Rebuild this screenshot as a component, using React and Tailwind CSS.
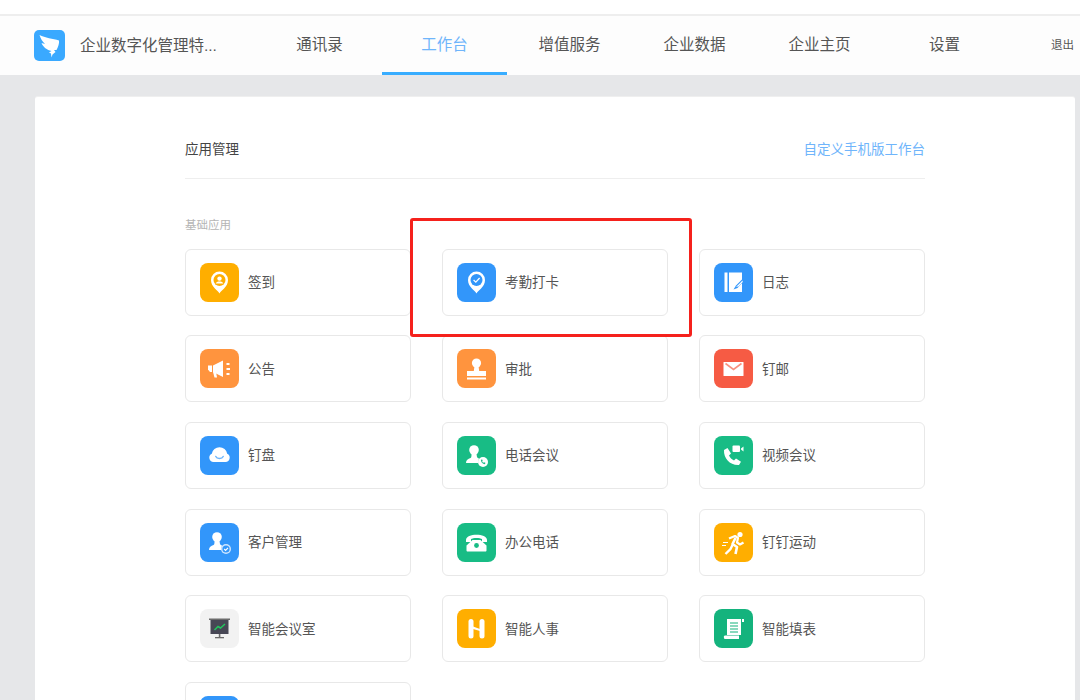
import React from 'react';

const Pin = ({ bg, children }) => (
    <>
        <path d="M19.5 30.5 C18 27.5 11 24 11 17 A8.5 8.5 0 0 1 28 17 C28 24 21 27.5 19.5 30.5Z" fill="#fff" />
        <circle cx="19.5" cy="17" r="6" fill={bg} />
        {children}
    </>
);

const icons = {
    sign: (
        <Pin bg="#ffae00">
            <circle cx="19.5" cy="15.6" r="2.2" fill="#fff" />
            <path d="M15.6 20.6 C16 18.9 17.6 18.4 19.5 18.4 C21.4 18.4 23 18.9 23.4 20.6Z" fill="#fff" />
        </Pin>
    ),
    attendance: (
        <Pin bg="#3296fa">
            <path d="M16.6 17 L18.8 19.2 L22.6 15" fill="none" stroke="#fff" strokeWidth="1.2" />
        </Pin>
    ),
    diary: (
        <>
            <rect x="10.5" y="9.5" width="3" height="19.5" fill="#fff" />
            <path d="M15 9.5 H28 V29 H15Z" fill="#fff" />
            <path d="M29 15.5 L22 22.5 L19.5 26.5 L23.5 25 L29.5 18.5Z" fill="#3296fa" />
            <path d="M28.5 17.5 L23.5 22.5 L22 23.8 L24.5 23.5 L28.8 19Z" fill="#fff" />
        </>
    ),
    notice: (
        <>
            <path d="M8 16.5 H12 V23 H10 L8 20.5Z" fill="#fff" />
            <path d="M13 16.5 L23 11.5 V28 L13 23Z" fill="#fff" />
            <path d="M13 23 H16 L17 28.5 H14.5Z" fill="#fff" />
            <rect x="26.5" y="14" width="3" height="2" fill="#fff" />
            <rect x="26.5" y="19" width="3.5" height="2" fill="#fff" />
            <rect x="26.5" y="24" width="3" height="2" fill="#fff" />
        </>
    ),
    approve: (
        <>
            <circle cx="19.5" cy="14" r="4.6" fill="#fff" />
            <path d="M17.5 17 H21.5 L22.2 22 H29 V27 H10 V22 H16.8Z" fill="#fff" />
            <rect x="10" y="28.5" width="19" height="2" fill="#fff" />
        </>
    ),
    mail: (
        <>
            <rect x="9.5" y="13" width="20" height="14" rx="0.5" fill="#fff" />
            <path d="M11.5 14.5 L19.5 20.5 L27.5 14.5" fill="none" stroke="#f8917f" strokeWidth="1.6" />
        </>
    ),
    disk: (
        <>
            <path d="M13.5 26 A4.3 4.3 0 0 1 11.8 17.8 A7.8 7.8 0 0 1 27.2 17.8 A4.3 4.3 0 0 1 25.5 26Z" fill="#fff" />
            <path d="M15.8 20.5 C17 23.2 22 23.2 23.2 20.5" fill="none" stroke="#6db5fb" strokeWidth="1.5" strokeLinecap="round" />
        </>
    ),
    phoneMeet: (
        <>
            <circle cx="17" cy="14" r="4.8" fill="#fff" />
            <path d="M14.5 18 H19.5 L20 21 C20.5 22 21 22 22 22.5 L21 27 H9 C9 24 11 23 13.5 22 C14.5 21.5 14.5 20 14.5 18Z" fill="#fff" />
            <circle cx="26" cy="26" r="5" fill="#fff" />
            <path d="M24 23.8 C23.8 26 25.6 28.2 28 28.2 L28.4 26.8 L26.9 26.2 L26.3 26.8 C25.8 26.5 25.3 26 25.1 25.4 L25.7 24.9 L25.2 23.4Z" fill="#18bc85" />
        </>
    ),
    videoMeet: (
        <>
            <path d="M10 14 L13.5 12 L17 17.5 L15 19.5 C16 21.8 17.8 23.5 20 24.4 L22 22.5 L27 25.8 L25 29 C16 29.5 9.5 22.5 10 14Z" fill="#fff" />
            <rect x="18.5" y="9.5" width="7.5" height="6.5" rx="1" fill="#fff" />
            <path d="M27 12.5 L29.5 10.5 V15.5 L27 13.5Z" fill="#fff" />
        </>
    ),
    customer: (
        <>
            <circle cx="17" cy="14" r="4.8" fill="#fff" />
            <path d="M14.5 18 H19.5 L20 21 C20.5 22 21 22 22 22.5 L21 27 H9 C9 24 11 23 13.5 22 C14.5 21.5 14.5 20 14.5 18Z" fill="#fff" />
            <circle cx="26" cy="26" r="5" fill="#cfe6fe" />
            <circle cx="26" cy="26" r="3.6" fill="#3296fa" />
            <path d="M24.2 26 L25.6 27.4 L28 24.8" fill="none" stroke="#fff" strokeWidth="1.2" />
        </>
    ),
    officePhone: (
        <>
            <path d="M9 17 C9 10 30 10 30 17 V19 H25 V16 C23 14.5 16 14.5 14 16 V19 H9Z" fill="#fff" />
            <path d="M15.5 17 H23.5 L29.5 22.5 V27.5 C29.5 28 29 28.5 28.5 28.5 H10.5 C10 28.5 9.5 28 9.5 27.5 V22.5Z" fill="#fff" />
            <circle cx="19.5" cy="22.5" r="2.4" fill="#18bc85" />
        </>
    ),
    sport: (
        <>
            <circle cx="26" cy="11.5" r="2.6" fill="#fff" />
            <path d="M15 15.5 L21 13 L24 15 L23 19.5 L26 21.5 L29.5 19.5" fill="none" stroke="#fff" strokeWidth="2.2" strokeLinejoin="round" />
            <path d="M21.5 15 L18.5 21 L23 24 L21.5 31" fill="none" stroke="#fff" strokeWidth="2.6" strokeLinejoin="round" />
            <path d="M18.5 22 L16.5 26 L11.5 31" fill="none" stroke="#fff" strokeWidth="2.4" />
            <path d="M9 19.5 H14 M8 22.5 H12" stroke="#fff" strokeWidth="1" />
        </>
    ),
    room: (
        <>
            <rect x="9" y="9.5" width="21" height="1.5" fill="#6b6b6b" />
            <rect x="10.5" y="11" width="18" height="14" fill="#474755" />
            <path d="M14.5 21 L18 17.5 L20.5 19 L25 15" fill="none" stroke="#22c55e" strokeWidth="1.5" />
            <rect x="18.8" y="25" width="1.6" height="3.5" fill="#6b6b6b" />
            <rect x="15" y="28" width="9" height="1.3" fill="#6b6b6b" />
        </>
    ),
    hr: (
        <>
            <rect x="11.5" y="10" width="5" height="19.5" rx="2.5" fill="#fff" />
            <rect x="22.5" y="10" width="5" height="19.5" rx="2.5" fill="#fff" />
            <path d="M16 17.5 L23 20 V22 L16 20Z" fill="#fff" />
        </>
    ),
    form: (
        <>
            <path d="M13 10 H27 V26 H13Z" fill="#fff" />
            <path d="M10 29 C9.5 27.5 10 26.5 11 26.5 H25 V30 H10.5Z" fill="#fff" />
            <rect x="28" y="10" width="2" height="3" fill="#fff" />
            <path d="M16 14 H24 M16 17 H24 M16 20 H24 M16 23 H24" stroke="#14b37d" strokeWidth="1.2" />
        </>
    ),
};

const apps = [
    { name: '签到', color: 'bg-[#ffae00]', icon: 'sign' },
    { name: '考勤打卡', color: 'bg-[#3296fa]', icon: 'attendance' },
    { name: '日志', color: 'bg-[#3296fa]', icon: 'diary' },
    { name: '公告', color: 'bg-[#ff943e]', icon: 'notice' },
    { name: '审批', color: 'bg-[#ff943e]', icon: 'approve' },
    { name: '钉邮', color: 'bg-[#f65b44]', icon: 'mail' },
    { name: '钉盘', color: 'bg-[#3296fa]', icon: 'disk' },
    { name: '电话会议', color: 'bg-[#18bc85]', icon: 'phoneMeet' },
    { name: '视频会议', color: 'bg-[#18bc85]', icon: 'videoMeet' },
    { name: '客户管理', color: 'bg-[#3296fa]', icon: 'customer' },
    { name: '办公电话', color: 'bg-[#18bc85]', icon: 'officePhone' },
    { name: '钉钉运动', color: 'bg-[#ffae00]', icon: 'sport' },
    { name: '智能会议室', color: 'bg-[#f2f2f2]', icon: 'room' },
    { name: '智能人事', color: 'bg-[#ffae00]', icon: 'hr' },
    { name: '智能填表', color: 'bg-[#14b37d]', icon: 'form' },
    { name: '', color: 'bg-[#3296fa]', icon: null },
];

const tabs = ['通讯录', '工作台', '增值服务', '企业数据', '企业主页', '设置'];

const App = () => {
    return (
        <div className="relative w-[1080px] h-[700px] overflow-hidden bg-[#e6e7e9] font-['Liberation_Sans','Noto_Sans_CJK_SC',sans-serif]">
            <div className="h-[14px] bg-white"></div>
            <div className="h-[2px] bg-[#eeeeee]"></div>

            {/* Header */}
            <header className="h-[59px] bg-[#fdfdfd] flex items-center">
                <div className="ml-[34px] w-[31px] h-[31px] rounded-[5px] bg-[#3aa9ff] flex items-center justify-center shrink-0">
                    <svg width="31" height="31" viewBox="0 0 31 31">
                        <path d="M5.5 5 C11 8 19 8.5 25 10.5 C25.5 13 24 17.5 22.5 20 H20 L21.5 22 L18.5 24.5 L17.5 27.5 L17 23.5 L15 22.5 L17.5 21 C13 20 9 17 7.5 13 L11 14 C8.5 11.5 6.5 8.5 5.5 5Z" fill="#fff" />
                    </svg>
                </div>
                <div className="ml-[15px] w-[142px] text-[15.5px] text-[#555555] whitespace-nowrap">企业数字化管理特...</div>
                <nav className="ml-[35px] flex h-full">
                    {tabs.map((tab) => (
                        <div
                            key={tab}
                            className={tab === '工作台'
                                ? 'w-[125px] h-full pt-[2px] flex items-center justify-center text-[15.5px] text-[#6fb5fb] border-b-[3px] border-[#38adff]'
                                : 'w-[125px] h-full pt-[2px] flex items-center justify-center text-[15.5px] text-[#555555] border-b-[3px] border-transparent'}
                        >
                            {tab}
                        </div>
                    ))}
                </nav>
                <div className="ml-[44px] text-[11.5px] text-[#555555] whitespace-nowrap">退出</div>
            </header>

            {/* Main card */}
            <main className="mt-[21px] mx-[35px] w-[1040px] h-[640px] bg-white rounded-t-[3px] px-[150px] border-t border-[#efefef]">
                <div className="h-[82px] flex items-end justify-between border-b border-[#eeeeee] pb-[18px] text-[13.5px] leading-[20px]">
                    <span className="text-[#444444]">应用管理</span>
                    <span className="text-[#6fb5fb]">自定义手机版工作台</span>
                </div>
                <div className="mt-[38px] text-[11.5px] leading-[16px] text-[#b5b5b5]">基础应用</div>
                <div className="mt-[15.8px] grid grid-cols-[226px_226px_226px] gap-x-[31px] gap-y-[19.6px]">
                    {apps.map((app, i) => (
                        <div key={i} className="h-[67px] rounded-[6px] border border-[#e8e8e8] flex items-center pl-[14px]">
                            <div className={`w-[39px] h-[39px] rounded-[8px] shrink-0 ${app.color}`}>
                                {app.icon && (
                                    <svg width="39" height="39" viewBox="0 0 39 39">{icons[app.icon]}</svg>
                                )}
                            </div>
                            <span className="ml-[9px] pt-[2px] text-[13.5px] text-[#555555]">{app.name}</span>
                        </div>
                    ))}
                </div>
            </main>

            {/* Red highlight drawn over the screenshot */}
            <div className="absolute left-[410px] top-[218px] w-[282px] h-[119px] border-[3px] border-[#f5211c] rounded-[3px]"></div>
        </div>
    );
};

export default App;
